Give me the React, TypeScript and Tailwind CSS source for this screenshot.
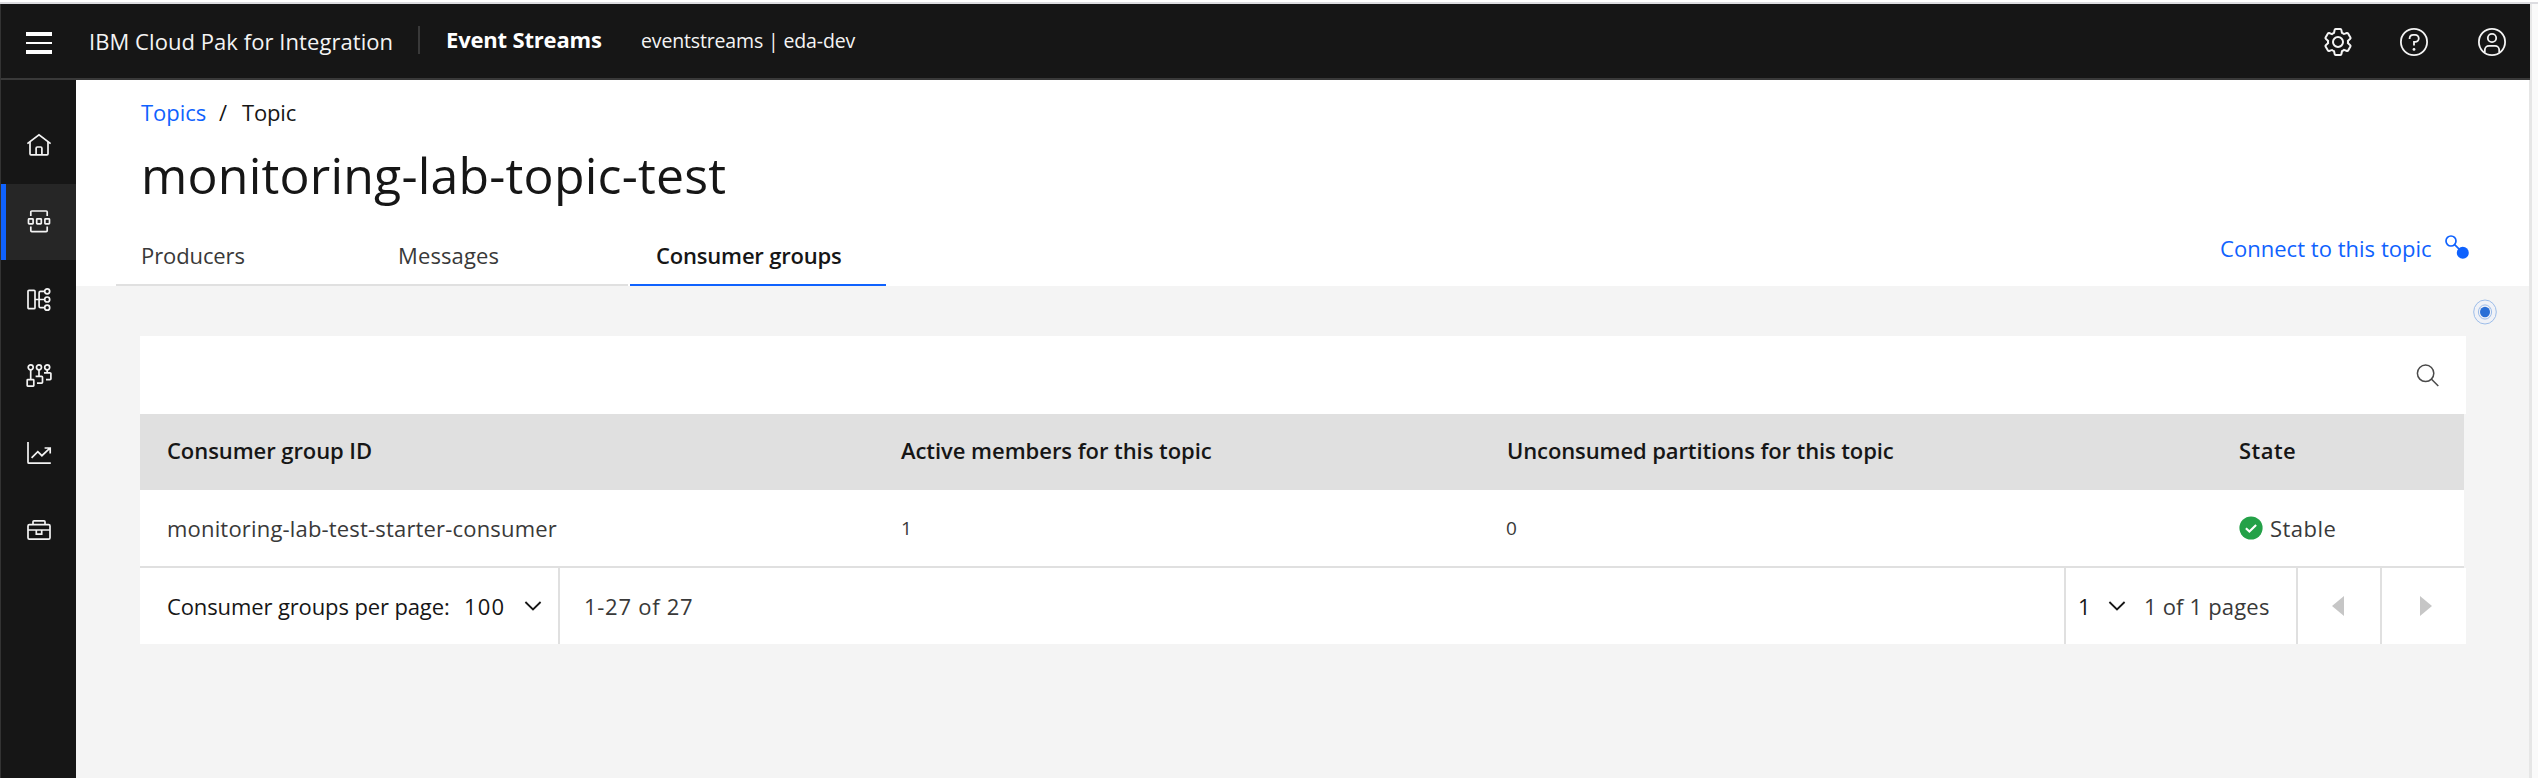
import React from "react";

type IconProps = { children: React.ReactNode };

function NavIcon({ children }: IconProps) {
  return (
    <svg
      width="26"
      height="26"
      viewBox="0 0 26 26"
      fill="none"
      stroke="#f4f4f4"
      strokeWidth="1.7"
      className="shrink-0"
    >
      {children}
    </svg>
  );
}

const navItems = [
  {
    name: "home",
    box: "h-[76px]",
    icon: (
      <NavIcon>
        <path d="M1.4 10.6 13 1.9l11.6 8.7" />
        <path d="M4 8.8v12a1 1 0 0 0 1 1h16a1 1 0 0 0 1-1v-12" />
        <path d="M10.1 21.5v-6.3a1.2 1.2 0 0 1 1.2-1.2h3.4a1.2 1.2 0 0 1 1.2 1.2v6.3" />
      </NavIcon>
    ),
  },
  {
    name: "topics",
    box: "h-[76px]",
    icon: (
      <NavIcon>
        <path d="M4.8 7V3a1 1 0 0 1 1-1h14.4a1 1 0 0 1 1 1v4M4.8 17.6v4a1 1 0 0 0 1 1h14.4a1 1 0 0 0 1-1v-4" />
        <rect x="2.5" y="9.8" width="4.6" height="5" rx="0.6" />
        <rect x="10.7" y="9.8" width="4.6" height="5" rx="0.6" />
        <rect x="18.9" y="9.8" width="4.6" height="5" rx="0.6" />
      </NavIcon>
    ),
  },
  {
    name: "schemas",
    box: "h-[77px]",
    icon: (
      <NavIcon>
        <rect x="2" y="4.3" width="7" height="18.4" rx="1" />
        <path d="M9 13.5h9.5M18.5 5.3h-4a1.4 1.4 0 0 0-1.4 1.4v13.6a1.4 1.4 0 0 0 1.4 1.4h4" />
        <circle cx="21.2" cy="5.3" r="2.5" />
        <circle cx="21.2" cy="13.5" r="2.5" />
        <circle cx="21.2" cy="21.7" r="2.5" />
      </NavIcon>
    ),
  },
  {
    name: "connectors",
    box: "h-[77px]",
    icon: (
      <NavIcon>
        <circle cx="4.7" cy="4.3" r="2.5" />
        <circle cx="13" cy="4.3" r="2.5" />
        <circle cx="21.2" cy="4.3" r="2.5" />
        <rect x="1.2" y="16.6" width="6.6" height="6.6" rx="0.6" />
        <path d="M4.7 6.8v9.8M13 6.8v6.4M21.2 6.8v3M9.6 13.4h6a.9.9 0 0 1 .9.9v4.9a.9.9 0 0 1-.9.9H11M18 9.9h6a.9.9 0 0 1 .9.9v5a.9.9 0 0 1-.9.9h-4" />
      </NavIcon>
    ),
  },
  {
    name: "monitoring",
    box: "h-[77px]",
    icon: (
      <NavIcon>
        <path d="M2 2v20.2a1 1 0 0 0 1 1h21.8" />
        <path d="m5.6 17.8 6.2-6.2 4.1 4.1 8-7.6M18.6 8h5.6v5.4" />
      </NavIcon>
    ),
  },
  {
    name: "toolbox",
    box: "h-[77px]",
    icon: (
      <NavIcon>
        <rect x="2" y="7.6" width="22" height="14.6" rx="1.4" />
        <path d="M7 7.6V4.8a1 1 0 0 1 1-1h10a1 1 0 0 1 1 1v2.8M2 13h22M10.3 13.2v4h5.4v-4" />
      </NavIcon>
    ),
  },
];

function Sidebar() {
  return (
    <nav className="flex w-[76px] shrink-0 flex-col border-l border-[#333333] bg-[#161616] pt-7">
      {navItems.map((item) => (
        <div
          key={item.name}
          className={
            item.name === "topics"
              ? `flex items-center border-l-[5px] border-[#0f62fe] bg-[#262626] pl-5 ${item.box}`
              : `flex items-center pl-[25px] ${item.box}`
          }
        >
          {item.icon}
        </div>
      ))}
    </nav>
  );
}

function Header() {
  return (
    <header className="flex h-[76px] w-[2530px] shrink-0 items-center border-b-2 border-l border-b-[#393939] border-l-[#333333] bg-[#161616] text-[#f4f4f4]">
      <div className="ml-[25px] flex w-[26px] flex-col gap-1.5 pt-1">
        <span className="h-1 bg-white" />
        <span className="h-0.5 bg-white" />
        <span className="h-1 bg-white" />
      </div>
      <span className="ml-[37px] w-[328px] pt-px text-[22px] tracking-[0.06px]">
        IBM Cloud Pak for Integration
      </span>
      <span className="mb-0.5 ml-px h-7 w-0.5 bg-[#393939]" />
      <span className="ml-[26px] w-[195px] pb-[3px] text-[22px] font-bold tracking-[-0.18px] text-white">
        Event Streams
      </span>
      <span className="text-[19.5px] tracking-[-0.15px]">eventstreams | eda-dev</span>
      <div className="mr-[22px] ml-auto flex items-center gap-[45px] pt-0.5">
        <svg width="32" height="32" viewBox="0 0 32 32" fill="#f4f4f4" className="-mr-px">
          <path d="M27,16.76c0-.25,0-.5,0-.76s0-.51,0-.77l1.92-1.68A2,2,0,0,0,29.3,11L26.94,7a2,2,0,0,0-1.73-1,2,2,0,0,0-.64.1l-2.43.82a11.35,11.35,0,0,0-1.31-.75l-.51-2.52a2,2,0,0,0-2-1.61H13.64a2,2,0,0,0-2,1.61l-.51,2.52a11.48,11.48,0,0,0-1.32.75L7.43,6.06A2,2,0,0,0,6.79,6,2,2,0,0,0,5.06,7L2.7,11a2,2,0,0,0,.41,2.51L5,15.24c0,.25,0,.5,0,.76s0,.51,0,.77L3.11,18.45A2,2,0,0,0,2.7,21L5.06,25a2,2,0,0,0,1.73,1,2,2,0,0,0,.64-.1l2.43-.82a11.35,11.35,0,0,0,1.31.75l.51,2.52a2,2,0,0,0,2,1.61h4.72a2,2,0,0,0,2-1.61l.51-2.52a11.48,11.48,0,0,0,1.32-.75l2.42.82a2,2,0,0,0,.64.1,2,2,0,0,0,1.73-1L29.3,21a2,2,0,0,0-.41-2.51ZM25.21,24l-3.43-1.16a8.86,8.86,0,0,1-2.71,1.57L18.36,28H13.64l-.71-3.55a9.36,9.36,0,0,1-2.7-1.57L6.79,24,4.43,20l2.72-2.4a8.9,8.9,0,0,1,0-3.13L4.43,12,6.79,8l3.43,1.16a8.86,8.86,0,0,1,2.71-1.57L13.64,4h4.72l.71,3.55a9.36,9.36,0,0,1,2.7,1.57L25.21,8,27.57,12l-2.72,2.4a8.9,8.9,0,0,1,0,3.13L27.57,20Z" />
          <path d="M16,22a6,6,0,1,1,6-6A5.94,5.94,0,0,1,16,22Zm0-10a3.91,3.91,0,0,0-4,4,3.91,3.91,0,0,0,4,4,3.91,3.91,0,0,0,4-4A3.91,3.91,0,0,0,16,12Z" />
        </svg>
        <svg width="32" height="32" viewBox="0 0 32 32" fill="none" stroke="#f4f4f4" strokeWidth="1.8">
          <circle cx="16" cy="16" r="13.1" />
          <path d="M11.6 13v-.8a3.6 3.6 0 0 1 3.6-3.4h2a3.4 3.4 0 0 1 0 7.1h-1.2v3.6" />
          <circle cx="16" cy="23.4" r="1.4" fill="#f4f4f4" stroke="none" />
        </svg>
        <svg
          className="ml-px"
          width="32"
          height="32"
          viewBox="0 0 32 32"
          fill="none"
          stroke="#f4f4f4"
          strokeWidth="1.8"
        >
          <circle cx="16" cy="16" r="13.1" />
          <circle cx="16" cy="12" r="4.2" />
          <path d="M8.8 26.6V24a4.2 4.2 0 0 1 4.2-4.2h6a4.2 4.2 0 0 1 4.2 4.2v2.6" />
        </svg>
      </div>
    </header>
  );
}

function PageHeading() {
  return (
    <section className="flex h-[206px] shrink-0 flex-col bg-white">
      <div className="mt-[17px] ml-[65px] flex h-[30px] items-center text-[22px] whitespace-nowrap text-[#161616]">
        <a className="w-[78px] tracking-[-0.04px] text-[#0f62fe]">Topics</a>
        <span className="w-[23px]">/</span>
        <span className="tracking-[-0.18px]">Topic</span>
      </div>
      <h1 className="mt-[14px] ml-[65px] h-[68px] text-[50px] leading-[68px] tracking-[0.2px] text-[#161616]">
        monitoring-lab-topic-test
      </h1>
      <div className="mt-auto flex items-end justify-between">
        <div className="ml-10 flex text-[22px] text-[#393939]">
          <div className="flex h-[59px] w-[256px] items-center border-b-2 border-[#e0e0e0] pl-[25px] tracking-[-0.1px]">
            Producers
          </div>
          <div className="flex h-[59px] w-[256px] items-center border-b-2 border-[#e0e0e0] pl-[26px] tracking-[0.12px]">
            Messages
          </div>
          <div className="ml-0.5 flex h-[59px] w-[256px] items-center border-b-2 border-[#0f62fe] pl-[26px] font-semibold tracking-[-0.19px] text-[#161616]">
            Consumer groups
          </div>
        </div>
        <a className="mr-[58px] flex h-[76px] items-center text-[22px] tracking-[0.03px] text-[#0f62fe]">
          <span className="w-[223px]">Connect to this topic</span>
          <svg className="mb-0.5" width="28" height="28" viewBox="0 0 28 28">
            <circle cx="8" cy="8" r="5" fill="none" stroke="#0f62fe" strokeWidth="1.7" />
            <path d="m11.6 11.6 4.6 4.6" stroke="#0f62fe" strokeWidth="1.7" />
            <circle cx="19.8" cy="19.8" r="6" fill="#0f62fe" />
          </svg>
        </a>
      </div>
    </section>
  );
}

function Chevron() {
  return (
    <svg width="18" height="12" viewBox="0 0 18 12" fill="none" stroke="#161616" strokeWidth="1.8">
      <path d="m1.4 2 7.6 7.4L16.6 2" />
    </svg>
  );
}

function GroupsTable() {
  return (
    <div className="ml-16 w-[2326px]">
      <div className="flex h-[78px] items-center justify-end bg-white pr-[26px]">
        <svg
          className="mt-0.5"
          width="24"
          height="24"
          viewBox="0 0 24 24"
          fill="none"
          stroke="#4a4a4a"
          strokeWidth="1.5"
        >
          <circle cx="9.6" cy="9.3" r="8.2" />
          <path d="m15.3 15 7 7" />
        </svg>
      </div>
      <div className="flex h-[76px] w-[2324px] items-center bg-[#e0e0e0] pb-1 text-[22px] font-semibold text-[#161616]">
        <div className="w-[761px] pl-[27px] tracking-[-0.07px]">Consumer group ID</div>
        <div className="w-[606px] tracking-[-0.05px]">Active members for this topic</div>
        <div className="w-[732px] tracking-[-0.11px]">Unconsumed partitions for this topic</div>
        <div className="tracking-[0.44px]">State</div>
      </div>
      <div className="flex h-[78px] w-[2324px] items-center border-b-2 border-[#e0e0e0] bg-white text-[22px] text-[#393939]">
        <div className="w-[761px] pl-[27px] tracking-[0.18px]">monitoring-lab-test-starter-consumer</div>
        <div className="w-[605px] pt-px text-[19px]">1</div>
        <div className="w-[733px] pt-px text-[19px]">0</div>
        <svg className="mb-px" width="24" height="24" viewBox="0 0 24 24">
          <circle cx="12" cy="12" r="11.6" fill="#24a148" />
          <path d="m6.9 12.2 3.5 3.4 6.7-6.6" fill="none" stroke="#ffffff" strokeWidth="2.1" />
        </svg>
        <span className="ml-[7px] tracking-[0.47px]">Stable</span>
      </div>
      <div className="flex h-[76px] items-center bg-white text-[22px] text-[#161616]">
        <span className="w-[324px] pl-[27px] tracking-[-0.12px]">Consumer groups per page:</span>
        <span className="w-[60px] tracking-[1.2px]">100</span>
        <Chevron />
        <div className="ml-4 flex h-full flex-1 items-center border-l-2 border-[#e0e0e0] pl-6 tracking-[0.73px] text-[#393939]">
          1-27 of 27
        </div>
        <div className="flex h-full w-[232px] items-center border-l-2 border-[#e0e0e0] pl-3">
          <span className="w-[30px]">1</span>
          <Chevron />
          <span className="ml-[18px] tracking-[0.18px] text-[#393939]">1 of 1 pages</span>
        </div>
        <div className="flex h-full w-[84px] items-center border-l-2 border-[#e0e0e0] pl-[34px]">
          <svg width="12" height="20" viewBox="0 0 12 20" fill="#c6c6c6">
            <path d="M12 0v20L0 10z" />
          </svg>
        </div>
        <div className="flex h-full w-[86px] items-center border-l-2 border-[#e0e0e0] pl-[38px]">
          <svg width="12" height="20" viewBox="0 0 12 20" fill="#c6c6c6">
            <path d="M0 0v20l12-10z" />
          </svg>
        </div>
      </div>
    </div>
  );
}

export default function App() {
  return (
    <div className="flex h-[778px] w-[2538px] flex-col overflow-hidden bg-white font-['Open_Sans',sans-serif]">
      <div className="mt-0.5 h-0.5 shrink-0 bg-[#dcdce0]" />
      <div className="flex flex-1">
        <div className="flex w-[2532px] flex-col">
          <div className="flex bg-[#e8e8e8]">
            <Header />
          </div>
          <div className="flex flex-1">
            <Sidebar />
            <main className="flex flex-1 flex-col bg-[#f4f4f4]">
              <PageHeading />
              <div className="flex h-[50px] justify-end pt-[13px] pr-8">
                <svg width="24" height="26" viewBox="0 0 24 26" fill="none" stroke="#9dbde9">
                  <ellipse cx="12" cy="13" rx="11.3" ry="12" fill="#f0f2f7" />
                  <ellipse cx="12" cy="13" rx="6.6" ry="7.1" />
                  <ellipse cx="12" cy="13" rx="5" ry="5.3" fill="#2a6fd6" stroke="none" />
                </svg>
              </div>
              <GroupsTable />
            </main>
            <div className="w-[3px] shrink-0 bg-[#e6e6e6]" />
          </div>
        </div>
        <div className="flex-1 bg-[#fafafa]" />
      </div>
    </div>
  );
}
